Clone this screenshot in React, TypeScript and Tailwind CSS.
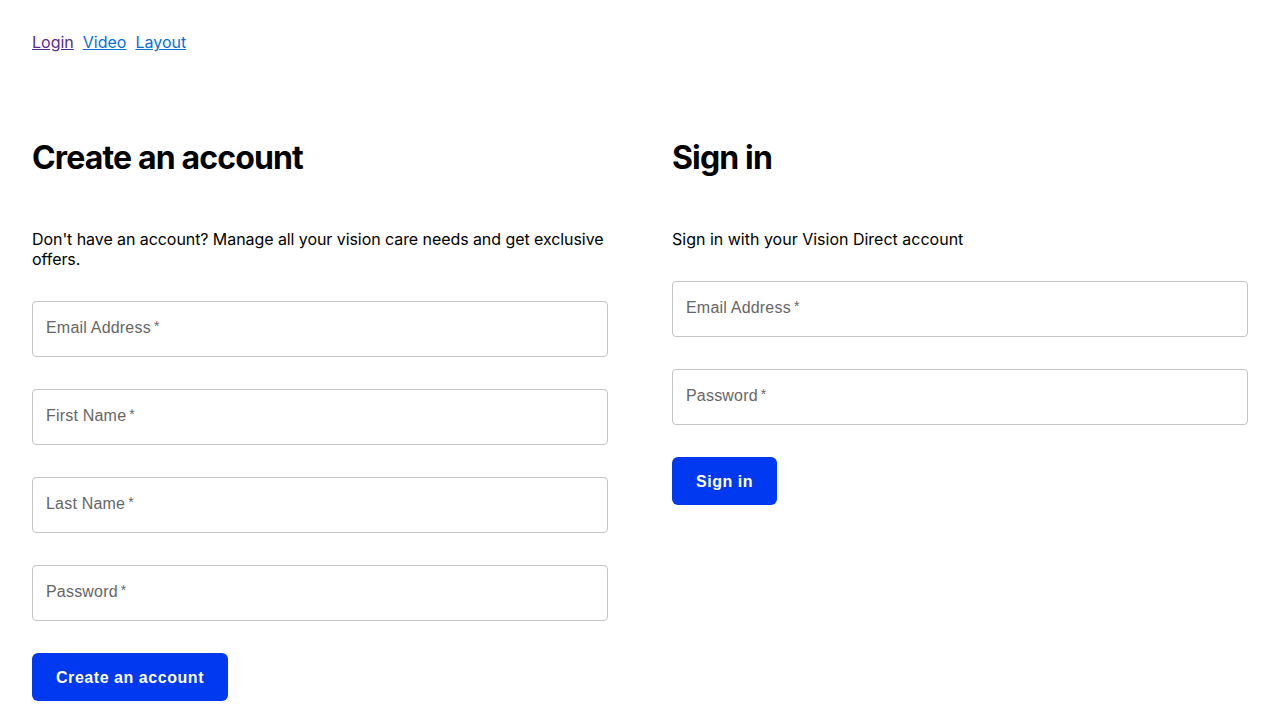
import React from 'react';

const font = { fontFamily: 'Inter, "Liberation Sans", sans-serif' };
const arial = { fontFamily: '"Liberation Sans", Arial, sans-serif' };

interface FieldProps {
  label: string;
  type?: string;
}

const Field = ({ label, type = 'text' }: FieldProps) => (
  <div className="relative h-14 w-full rounded-[4px] border border-[#c4c4c4] bg-white">
    <input type={type} aria-label={label} className="h-full w-full rounded-[4px] bg-transparent px-[13px] outline-none" />
    <span
      className="pointer-events-none absolute left-[13px] top-[calc(50%-1px)] -translate-y-1/2 text-base tracking-[0.2px] text-[#666666]"
      style={arial}
    >
      {label}
      <span className="relative -top-[2px] ml-[3px] text-[14px]">*</span>
    </span>
  </div>
);

export default function App() {
  return (
    <div className="min-h-screen bg-white px-8 pt-[31px] text-black" style={font}>
      <nav className="flex gap-[9px] text-base leading-[22px]">
        <a href="#login" className="text-[#5a2a92] underline">Login</a>
        <a href="#video" className="text-[#0a6fd6] underline">Video</a>
        <a href="#layout" className="text-[#0a6fd6] underline">Layout</a>
      </nav>

      <div className="mt-[85px] grid grid-cols-2 gap-16">
        <section>
          <h1 className="text-[32px] font-bold leading-[40px] tracking-[-0.85px]">Create an account</h1>
          <p className="mt-[51px] text-base leading-5 tracking-[-0.07px]">
            Don't have an account? Manage all your vision care needs and get exclusive offers.
          </p>
          <form className="mt-8 flex flex-col gap-8" onSubmit={e => e.preventDefault()}>
            <Field label="Email Address" type="email" />
            <Field label="First Name" />
            <Field label="Last Name" />
            <Field label="Password" type="password" />
            <div>
              <button
                type="submit"
                className="h-12 rounded-md bg-[#0039ef] px-6 pt-[2px] text-base font-bold tracking-[0.55px] text-white"
                style={arial}
              >
                Create an account
              </button>
            </div>
          </form>
        </section>

        <section>
          <h1 className="text-[32px] font-bold leading-[40px] tracking-[-0.85px]">Sign in</h1>
          <p className="mt-[51px] text-base leading-5">Sign in with your Vision Direct account</p>
          <form className="mt-8 flex flex-col gap-8" onSubmit={e => e.preventDefault()}>
            <Field label="Email Address" type="email" />
            <Field label="Password" type="password" />
            <div>
              <button
                type="submit"
                className="h-12 rounded-md bg-[#0039ef] px-6 pt-[2px] text-base font-bold tracking-[0.55px] text-white"
                style={arial}
              >
                Sign in
              </button>
            </div>
          </form>
        </section>
      </div>
    </div>
  );
}
